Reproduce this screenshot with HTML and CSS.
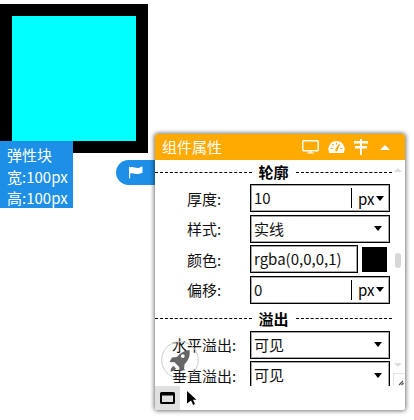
FILE: index.html
```html
<!DOCTYPE html>
<html lang="zh">
<head>
<meta charset="utf-8">
<title>组件属性</title>
<link rel="stylesheet" href="styles.css">
</head>
<body>
<div class="box"><div class="box-inner"></div></div>
<div class="info">弹性块<br>宽:100px<br>高:100px</div>
<div class="tab">
  <svg width="16" height="13" viewBox="0 0 16 13"><path d="M1 1.200v11h1.200V7.600c3-1.400 5.200 1 8 .4 1.600-.3 3-1 4.300-1.300V.6c-1.500.3-2.700 1.200-4.300 1.400C7.400 2.400 5 .2 2.200 1.400 2 .8 1 .6 1 1.200z" fill="#fff"/></svg>
</div>
<section class="panel">
  <header class="head">
    <span class="head-title">组件属性</span>
    <svg class="ic-screen" width="17" height="14" viewBox="0 0 17 14"><path d="M1.600.8h13.800a.8.800 0 0 1 .8.800v8.400a.8.800 0 0 1-.8.800H1.600a.8.800 0 0 1-.8-.8V1.600a.8.800 0 0 1 .8-.8z" fill="none" stroke="#fff" stroke-width="1.400"/><path d="M7.500 11h2v1.500h2.500v1H5v-1h2.500z" fill="#fff"/></svg>
    <svg class="ic-gauge" width="17" height="14" viewBox="0 0 17 14"><path fill-rule="evenodd" fill="#fff" d="M8.500 1a8 8 0 0 0-7 12h14a8 8 0 0 0-7-12zM8 2.500h1v2H8zM4 4.500l1-.7 1 1.500-.9.700zM2.800 8h2v1h-2zM12.200 8h2v1h-2zM11 3.800l1 .7-2.300 5.200a1.300 1.300 0 1 1-1.900-.9z"/></svg>
    <svg class="ic-sliders" width="16" height="16" viewBox="0 0 16 16"><path d="M7 0h2v2h6v2.500H9V7h5v2.500H9V16H7V9.500H2V7h5V4.500H1V2h6z" fill="#fff"/></svg>
    <span class="ic-up"></span>
  </header>
  <div class="body">
    <div class="scroll">
      <h3 class="section"><span>轮廓</span></h3>
      <div class="row"><label class="lab">厚度:</label><div class="field"><span class="val">10</span><span class="unit">px<i class="caret"></i></span></div></div>
      <div class="row"><label class="lab">样式:</label><div class="field"><span class="val">实线</span><i class="caret end"></i></div></div>
      <div class="row"><label class="lab">颜色:</label><div class="field short"><span class="val">rgba(0,0,0,1)</span></div><div class="swatch"></div></div>
      <div class="row"><label class="lab">偏移:</label><div class="field"><span class="val">0</span><span class="unit">px<i class="caret"></i></span></div></div>
      <h3 class="section second"><span>溢出</span></h3>
      <div class="row"><label class="lab">水平溢出:</label><div class="field"><span class="val">可见</span><i class="caret end"></i></div></div>
      <div class="row"><label class="lab">垂直溢出:</label><div class="field"><span class="val">可见</span><i class="caret end"></i></div></div>
    </div>
    <div class="bar">
      <i class="bar-up"></i>
      <i class="bar-thumb"></i>
      <i class="bar-down"></i>
    </div>
    <div class="grip">
      <svg width="12" height="13" viewBox="0 0 12 13"><path d="M5 11l4-4M7.500 11l2-2" stroke="#555" stroke-width="1.200" fill="none"/></svg>
    </div>
  </div>
  <footer class="tools">
    <div class="tool on"><svg width="15" height="12" viewBox="0 0 15 12"><path d="M1.500 0h12A1.500 1.500 0 0 1 15 1.500v9a1.500 1.500 0 0 1-1.500 1.500h-12A1.500 1.500 0 0 1 0 10.500v-9A1.500 1.500 0 0 1 1.500 0zM2 3.500V10h11V3.500z" fill="#000" fill-rule="evenodd"/></svg></div>
    <svg class="pointer" width="10" height="14" viewBox="0 0 10 14"><path d="M0 0l9.500 8.800H6l2 4.300-1.900.9-2-4.500L0 12.500z" fill="#000"/></svg>
  </footer>
  <div class="rocket">
    <svg width="38" height="38" viewBox="0 0 38 38"><circle cx="19" cy="19" r="18.300" fill="none" stroke="#ccc" stroke-width="1"/><path fill-rule="evenodd" d="M28.500 9c-5.500.5-9.500 3-12.500 7l-5 .5-2.500 4.500 5 .3 4.700 4.700.3 4.700 4.500-2.500.5-5c3.500-3.200 6-8 5-13.700zM21.800 13.200a1.900 1.900 0 1 1 0 3.800 1.900 1.900 0 0 1 0-3.800zM12.500 25c-1.700.8-2.700 2.500-3 5.500 3-.3 4.700-1.300 5.500-3z" fill="#555" fill-opacity=".9"/></svg>
  </div>
</section>
</body>
</html>
```
FILE: styles.css
```css
* { box-sizing: border-box; }
html, body { margin: 0; height: 100%; }
body {
  position: relative;
  width: 414px;
  height: 420px;
  overflow: hidden;
  background: #fff;
  font-family: "Noto Sans CJK SC", "Noto Sans", sans-serif;
  font-size: 15px;
  color: #000;
}
.box {
  position: absolute;
  left: 0;
  top: 4px;
  width: 148px;
  height: 149px;
  background: #000;
  padding: 12px;
}
.box-inner { width: 124px; height: 125px; background: #0ff; }
.info {
  position: absolute;
  left: 0;
  top: 141px;
  width: 73px;
  height: 67px;
  padding: 3px 0 0 7px;
  background: #1e8fe6;
  color: #fff;
  font-size: 15px;
  line-height: 21.500px;
}
.tab {
  position: absolute;
  left: 116px;
  top: 160px;
  width: 39px;
  height: 25px;
  padding: 6px 0 0 12px;
  background: #1e8fe6;
  border-radius: 13px 0 0 13px;
  display: flex;
  align-items: flex-start;
}
.panel {
  position: absolute;
  left: 155px;
  top: 134px;
  width: 250px;
  height: 276px;
  background: #fff;
  border-radius: 3px;
  box-shadow: 0 0 4px 1px rgba(0,0,0,.55);
  display: flex;
  flex-direction: column;
}
.head {
  height: 26px;
  background: #ffaa00;
  color: #fff;
  display: flex;
  align-items: center;
  padding: 0 0 0 7px;
  border-radius: 3px 3px 0 0;
  flex: none;
}
.head-title { font-size: 15px; width: 140px; line-height: 24px; font-weight: 400; }
.ic-screen { margin-right: 9px; }
.ic-gauge { margin-right: 8px; }
.ic-sliders { margin-right: 11px; }
.ic-up {
  width: 0; height: 0;
  border-left: 5px solid transparent;
  border-right: 5px solid transparent;
  border-bottom: 5px solid #fff;
}
.body { position: relative; flex: 1; overflow: hidden; }
.scroll { width: 237px; }
.section {
  margin: 0;
  height: 24px;
  display: flex;
  align-items: center;
  justify-content: center;
  font-size: 15px;
  font-weight: 700;
  line-height: 24px;
}
.section span {
  display: flex;
  align-items: center;
  gap: 7px;
  width: 100%;
  justify-content: center;
}
.section span::before, .section span::after {
  content: "";
  flex: 1;
  border-top: 1px dashed #000;
}
.second { margin-top: 1.330px; }
.row {
  display: flex;
  align-items: center;
  height: 28px;
  margin-bottom: 2.670px;
}
.lab { width: 95px; padding: 0 0 0 3px; text-align: center; flex: none; font-size: 15px; color: #111; }
.field {
  width: 140px;
  height: 28px;
  border: 1px solid #000;
  box-shadow: inset 0 0 0 1px rgba(0,0,0,.35);
  display: flex;
  align-items: center;
  padding-left: 3px;
  background: #fff;
}
.field.short { width: 108px; }
.val { flex: 1; font-size: 15px; line-height: 22px; color: #111; }
.unit {
  display: flex;
  align-items: center;
  width: 38px;
  height: 20px;
  border-left: 1px solid #000;
  padding-left: 6px;
  font-size: 15px;
}
.caret {
  width: 0; height: 0;
  margin-left: 1px;
  border-left: 4px solid transparent;
  border-right: 4px solid transparent;
  border-top: 5px solid #000;
}
.caret.end { margin-right: 7px; }
.swatch { width: 25px; height: 25px; background: #000; margin-left: 4px; }
.bar { position: absolute; left: 240px; top: 0; width: 6px; height: 100%; }
.bar-up, .bar-down, .bar-thumb { position: absolute; left: 0; }
.bar-up {
  top: 8px;
  left: -1px;
  border-left: 4px solid transparent;
  border-right: 4px solid transparent;
  border-bottom: 4px solid #ddd;
}
.bar-thumb { top: 93px; width: 6px; height: 15px; background: #d8d8d8; border-radius: 3px; }
.bar-down {
  top: 203px;
  left: -1px;
  border-left: 4px solid transparent;
  border-right: 4px solid transparent;
  border-top: 4px solid #ddd;
}
.grip {
  position: absolute;
  right: 0;
  bottom: 0;
  width: 12px;
  height: 13px;
  background: #fff;
  border: 1px solid #e4e4e4;
  border-width: 1px 0 0 1px;
}
.grip svg { display: block; }
.tools {
  height: 24px;
  flex: none;
  display: flex;
  align-items: center;
  background: #fff;
  border-radius: 0 0 3px 3px;
}
.tool {
  width: 25px;
  height: 24px;
  background: #e0e0e0;
  display: flex;
  align-items: center;
  justify-content: center;
}
.pointer { margin-left: 7px; }
.rocket { position: absolute; left: 6px; top: 207px; width: 38px; height: 38px; }
.rocket svg { display: block; }
```
